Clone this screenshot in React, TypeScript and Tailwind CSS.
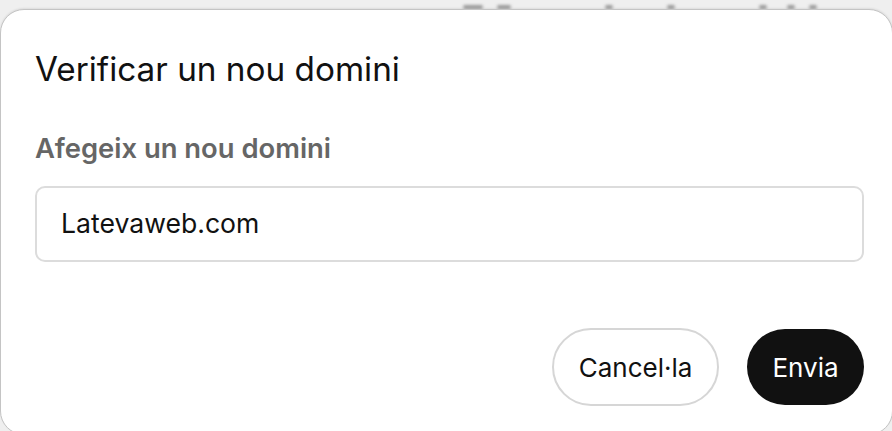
import React from 'react'

export default function App() {
  return (
    <div className="relative h-[431px] w-[892px] overflow-hidden bg-[#efefef]" style={{ fontFamily: 'Inter, "Noto Sans", sans-serif' }}>
      {/* blurred page content behind the overlay */}
      <div className="flex h-[9px] items-end gap-[14px] pl-[463px] blur-[1.5px]">
        <div className="h-[4px] w-[20px] rounded-sm bg-[#9a9a9a]" />
        <div className="h-[4px] w-[14px] rounded-sm bg-[#9a9a9a]" />
        <div className="ml-[80px] h-[4px] w-[8px] rounded-sm bg-[#9a9a9a]" />
        <div className="ml-[40px] h-[4px] w-[8px] rounded-sm bg-[#9a9a9a]" />
        <div className="ml-[70px] h-[4px] w-[8px] rounded-sm bg-[#9a9a9a]" />
        <div className="ml-[6px] h-[4px] w-[8px] rounded-sm bg-[#9a9a9a]" />
        <div className="h-[4px] w-[8px] rounded-sm bg-[#9a9a9a]" />
      </div>

      <div className="absolute left-0 top-[9px] flex h-[426px] w-[893px] flex-col rounded-[24px] border border-[#c4c4c4] bg-white pl-[34px] pr-[28px] pt-[40px] shadow-[0_-1px_2px_rgba(0,0,0,0.08)]">
        <h2 className="text-[33.3px] leading-[38px] text-[#111]">Verificar un nou domini</h2>

        <label className="mt-[44px] text-[27.4px] font-semibold leading-[32px] text-[#666]">Afegeix un nou domini</label>

        <div className="mt-[22px] flex h-[76px] items-center rounded-[10px] border-2 border-[#dcdcdc] px-[24px]">
          <input
            defaultValue="Latevaweb.com"
            className="w-full bg-transparent text-[26.6px] text-[#111] outline-none"
          />
        </div>

        <div className="mt-[66px] flex justify-end gap-[28px]">
          <button className="flex h-[78px] w-[167px] items-center justify-center rounded-full border-2 border-[#d6d6d6] bg-white text-[26px] text-[#111]">
            Cancel·la
          </button>
          <button className="mt-[1px] flex h-[76px] w-[117px] items-center justify-center rounded-full bg-[#111] text-[26px] text-white">
            Envia
          </button>
        </div>
      </div>
    </div>
  )
}
